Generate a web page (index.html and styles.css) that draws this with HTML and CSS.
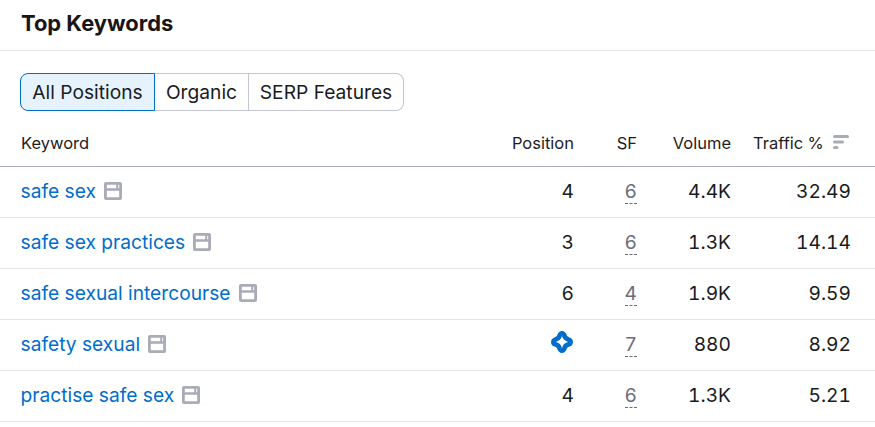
FILE: index.html
```html
<!DOCTYPE html>
<html lang="en">
<head>
<meta charset="utf-8">
<title>Top Keywords</title>
<link rel="stylesheet" href="styles.css">
</head>
<body>
<svg class="defs" width="0" height="0" aria-hidden="true">
  <symbol id="serp" viewBox="0 0 18 18">
    <path fill="#a9abb6" fill-rule="evenodd" d="M2 0h14a2 2 0 0 1 2 2v14a2 2 0 0 1-2 2H2a2 2 0 0 1-2-2V2a2 2 0 0 1 2-2Zm.8 8.800v6.400h12.400V8.800H2.800Zm0-6v3.400h9.400V2.800H2.800Zm11.400 0v3.400h1V2.800h-1Z"/>
  </symbol>
</svg>
<section class="card">
  <header class="head"><h1 class="title">Top Keywords</h1></header>
  <div class="tabs">
    <button class="tab tab-active">All Positions</button>
    <button class="tab">Organic</button>
    <button class="tab">SERP Features</button>
  </div>
  <div class="row row-head">
    <div>Keyword</div>
    <div class="num">Position</div>
    <div class="num">SF</div>
    <div class="num">Volume</div>
    <div class="num traffic">Traffic %
      <svg class="sort" width="16" height="14" viewBox="0 0 16 14"><rect x="0" y="0" width="16" height="3" rx="1.500"/><rect x="0" y="5.500" width="11" height="3" rx="1.500"/><rect x="0" y="11" width="5.500" height="3" rx="1.500"/></svg>
    </div>
  </div>
  <div class="row">
    <div class="kw"><a class="link">safe sex</a><svg class="serp"><use href="#serp"/></svg></div>
    <div class="num">4</div><div class="num"><span class="sf">6</span></div><div class="num">4.4K</div><div class="num val">32.49</div>
  </div>
  <div class="row">
    <div class="kw"><a class="link">safe sex practices</a><svg class="serp"><use href="#serp"/></svg></div>
    <div class="num">3</div><div class="num"><span class="sf">6</span></div><div class="num">1.3K</div><div class="num val">14.14</div>
  </div>
  <div class="row">
    <div class="kw"><a class="link">safe sexual intercourse</a><svg class="serp"><use href="#serp"/></svg></div>
    <div class="num">6</div><div class="num"><span class="sf">4</span></div><div class="num">1.9K</div><div class="num val">9.59</div>
  </div>
  <div class="row">
    <div class="kw"><a class="link">safety sexual</a><svg class="serp"><use href="#serp"/></svg></div>
    <div class="num"><svg class="feat" width="24" height="24" viewBox="0.5 0.5 21 21"><path fill="none" stroke="#006dca" stroke-width="4.200" stroke-linejoin="round" d="M11 3.500C12.500 3.500 13 5 13.500 6.500C14 8 15.500 8.500 17 9C18 9.300 18.500 10 18.500 11C18.500 12 18 12.700 17 13C15.500 13.500 14 14 13.500 15.500C13 17 12.500 18.500 11 18.500C9.500 18.500 9 17 8.500 15.500C8 14 6.500 13.500 5 13C4 12.700 3.500 12 3.500 11C3.500 10 4 9.300 5 9C6.500 8.500 8 8 8.500 6.500C9 5 9.500 3.500 11 3.500Z"/></svg></div>
    <div class="num"><span class="sf">7</span></div><div class="num">880</div><div class="num val">8.92</div>
  </div>
  <div class="row">
    <div class="kw"><a class="link">practise safe sex</a><svg class="serp"><use href="#serp"/></svg></div>
    <div class="num">4</div><div class="num"><span class="sf">6</span></div><div class="num">1.3K</div><div class="num val">5.21</div>
  </div>
</section>
</body>
</html>
```
FILE: styles.css
```css
* { box-sizing: border-box; }
html, body { margin: 0; padding: 0; background: #fff; }
body { font-family: Inter, "Liberation Sans", sans-serif; color: #191b23; overflow: hidden; }
.defs { position: absolute; }
.card { width: 875px; }
.head { height: 51px; border-bottom: 1px solid #e4e5ea; padding: 0 21px; display: flex; align-items: flex-start; }
.title { margin: 0; padding-top: 11px; font-size: 21.900px; line-height: 25px; font-weight: 700; color: #1a1414; }
.tabs { display: flex; margin: 22px 0 0 20px; height: 38px; }
.tab { font: 400 19.200px/24px Inter, "Liberation Sans", sans-serif; color: #191b23; background: #fff; border: 1px solid #c4c7cf; border-left: 0; padding: 0; margin: 0; height: 38px; }
.tab:nth-child(2) { width: 94px; }
.tab:nth-child(3) { width: 155px; border-radius: 0 8px 8px 0; }
.tab-active { width: 135px; background: #e6f3ff; border: 1px solid #006dca; border-radius: 8px 0 0 8px; }
.row { display: grid; grid-template-columns: 479px 74px 63px 94px 120px; padding-left: 21px; padding-bottom: 2px; height: 51px; align-items: center; border-bottom: 1px solid #e4e5ea; font-size: 19.200px; line-height: 24px; }
.row-head { height: 56px; font-size: 16.500px; line-height: 20px; border-bottom-color: #a9abb6; padding-top: 8px; padding-bottom: 0; color: #1f1c1e; }
.num { text-align: right; display: flex; justify-content: flex-end; align-items: center; font-variant-numeric: tabular-nums; }
.traffic { justify-content: flex-start; padding-left: 22px; gap: 9px; white-space: nowrap; }
.val { padding-right: 0; }
.kw { display: flex; align-items: center; gap: 8px; white-space: nowrap; margin-left: -0.500px; }
.link { color: #006dca; }
.serp { width: 18px; height: 18px; flex: none; }
.sort { fill: #a9abb6; flex: none; margin-top: -1px; }
.sf { color: #6c6e79; border-bottom: 1px dashed #6c6e79; line-height: 21px; height: 23px; display: inline-block; margin-top: 2px; }
.feat { display: block; margin: -4px 0 0 0; }
```
